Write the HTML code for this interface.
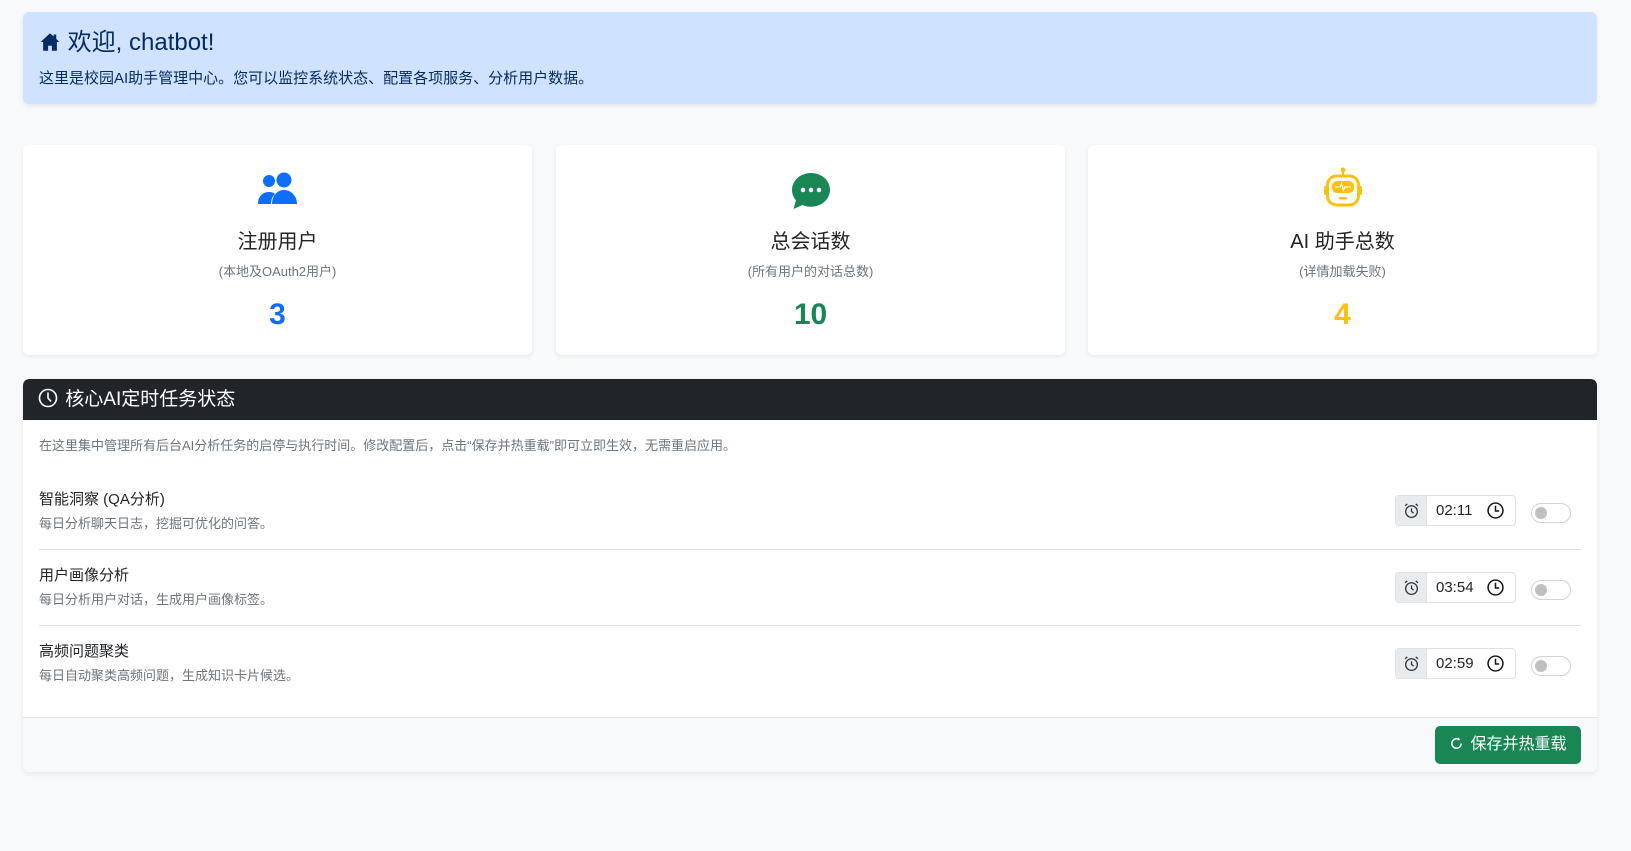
<!DOCTYPE html>
<html><head><meta charset="utf-8"><style>
*{box-sizing:border-box;margin:0;padding:0}
body{width:1631px;height:851px;background:#f8f9fa;font-family:"Liberation Sans","Noto Sans CJK SC",sans-serif;color:#212529;position:relative;overflow:hidden}
.abs{position:absolute}
.alert{left:23px;top:12px;width:1574px;height:92px;background:#cfe2ff;border-radius:6px;box-shadow:0 2px 4px rgba(0,0,0,.08);color:#052c65}
.card{background:#fff;border-radius:6px;box-shadow:0 2px 4px rgba(0,0,0,.07)}
.stat{top:145px;height:210px;width:509px;text-align:center}
.stat .t{position:absolute;top:84px;width:100%;font-size:20px;line-height:26px}
.stat .s{position:absolute;top:116px;width:100%;font-size:13px;color:#6c757d}
.stat .n{position:absolute;top:152px;width:100%;font-size:30px;font-weight:bold;line-height:36px}
.stat svg{position:absolute;left:50%;top:27px;transform:translateX(-50%)}
.row{position:absolute;left:16px;width:1542px}
.row .a{font-size:15px;line-height:20px}
.row .b{font-size:13px;color:#6c757d;margin-top:3px}
.ig{position:absolute;left:1372px;width:121px;height:31px;border:1px solid #dee2e6;border-radius:4px;background:#fff}
.ig .p{position:absolute;left:0;top:0;width:31px;height:29px;background:#e9ecef;border-right:1px solid #dee2e6;border-radius:4px 0 0 4px}
.ig .v{position:absolute;left:40px;top:6px;font-size:15px}
.tg{position:absolute;left:1508px;width:40px;height:20px;border:1px solid #ced4da;border-radius:10px}
.tg:after{content:"";position:absolute;left:3px;top:3px;width:12px;height:12px;border-radius:50%;background:#bfbfbf}
hr.d{position:absolute;left:16px;width:1542px;border:0;border-top:1px solid #dee2e6}
</style></head><body>
<div class="abs alert">
 <div class="abs" style="left:16px;top:15px;font-size:24px;line-height:32px">
  <svg width="22" height="20" viewBox="0 0 16 16" style="vertical-align:-2px"><path fill="#052c65" d="M8 1 0.5 8h2v7h4v-4h3v4h4V8h2L13 5.5V2h-2v1.6z"/></svg> 欢迎, chatbot!</div>
 <div class="abs" style="left:16px;top:55px;font-size:15px">这里是校园AI助手管理中心。您可以监控系统状态、配置各项服务、分析用户数据。</div>
</div>

<div class="abs card stat" style="left:23px">
 <svg width="40" height="34" viewBox="0 0 40 34"><circle cx="11" cy="9" r="6" fill="#0d6efd"/><circle cx="26" cy="8" r="7.5" fill="#0d6efd"/><path d="M0 32c0-8 5-12 11-12 3 0 5 1 6 2-3 3-4 6-4 10z" fill="#0d6efd"/><path d="M14 32c0-9 6-14 12-14s13 5 13 14z" fill="#0d6efd"/></svg>
 <div class="t">注册用户</div><div class="s">(本地及OAuth2用户)</div><div class="n" style="color:#0d6efd">3</div>
</div>
<div class="abs card stat" style="left:556px">
 <svg width="40" height="38" viewBox="0 0 40 38"><path d="M20 1C9.5 1 1 8.5 1 18c0 4 1.5 7.5 4 10.3L2.5 37l9-4c2.6 1.2 5.5 1.8 8.5 1.8 10.5 0 19-7.6 19-17S30.5 1 20 1z" fill="#198754"/><circle cx="12" cy="18" r="2.3" fill="#fff"/><circle cx="20" cy="18" r="2.3" fill="#fff"/><circle cx="28" cy="18" r="2.3" fill="#fff"/></svg>
 <div class="t">总会话数</div><div class="s">(所有用户的对话总数)</div><div class="n" style="color:#198754">10</div>
</div>
<div class="abs card stat" style="left:1088px">
 <svg width="40" height="40" viewBox="0 0 40 40" style="top:22px"><circle cx="20" cy="3" r="2.5" fill="#ffc107"/><rect x="19" y="3" width="2" height="6" fill="#ffc107"/><rect x="4.5" y="9" width="31" height="29" rx="9" fill="none" stroke="#ffc107" stroke-width="3"/><rect x="1" y="19" width="3" height="9" rx="1.5" fill="#ffc107"/><rect x="36" y="19" width="3" height="9" rx="1.5" fill="#ffc107"/><rect x="9" y="14" width="22" height="12" rx="5" fill="#ffc107"/><path d="M12 20h5l1.5-3 2 6 1.5-3h6" stroke="#fff" stroke-width="1.3" fill="none"/><rect x="16" y="30" width="8" height="2.5" rx="1" fill="#ffc107"/></svg>
 <div class="t">AI 助手总数</div><div class="s">(详情加载失败)</div><div class="n" style="color:#ffc107">4</div>
</div>

<div class="abs card" style="left:23px;top:379px;width:1574px;height:393px;overflow:hidden">
 <div class="abs" style="left:0;top:0;width:100%;height:41px;background:#212529;border-radius:6px 6px 0 0;color:#fff;font-size:19px;line-height:41px;padding-left:15px">
  <svg width="20" height="20" viewBox="0 0 20 20" style="vertical-align:-3px;margin-right:2px"><circle cx="10" cy="10" r="8.5" fill="none" stroke="#fff" stroke-width="1.6"/><path d="M10 4.5V10l3 3.5" stroke="#fff" stroke-width="1.6" fill="none"/></svg> 核心AI定时任务状态</div>
 <div class="abs" style="left:16px;top:56px;font-size:13px;color:#6c757d">在这里集中管理所有后台AI分析任务的启停与执行时间。修改配置后，点击“保存并热重载”即可立即生效，无需重启应用。</div>

 <div class="row" style="top:111px"><div class="a">智能洞察 (QA分析)</div><div class="b">每日分析聊天日志，挖掘可优化的问答。</div></div>
 <div class="ig" style="top:116px"><div class="p"></div><div class="v">02:11</div></div><div class="tg" style="top:124px"></div>
 <hr class="d" style="top:170px">
 <div class="row" style="top:187px"><div class="a">用户画像分析</div><div class="b">每日分析用户对话，生成用户画像标签。</div></div>
 <div class="ig" style="top:193px"><div class="p"></div><div class="v">03:54</div></div><div class="tg" style="top:201px"></div>
 <hr class="d" style="top:246px">
 <div class="row" style="top:263px"><div class="a">高频问题聚类</div><div class="b">每日自动聚类高频问题，生成知识卡片候选。</div></div>
 <div class="ig" style="top:269px"><div class="p"></div><div class="v">02:59</div></div><div class="tg" style="top:277px"></div>

 <div class="abs" style="left:0;top:338px;width:100%;height:55px;background:#f8f9fa;border-top:1px solid #dee2e6"></div>
 <div class="abs" style="left:1412px;top:347px;width:146px;height:38px;background:#198754;border-radius:5px;color:#fff;font-size:16px;line-height:38px;text-align:center">
  <svg width="15" height="15" viewBox="0 0 16 16" style="vertical-align:-2px;margin-right:6px"><path d="M13 8a5 5 0 1 1-2-4" stroke="#fff" stroke-width="1.6" fill="none"/><path d="M10 1.5 12 4l-3 .8z" fill="#fff"/></svg>保存并热重载</div>
</div>
<svg class="abs" style="left:1403px;top:502px" width="17" height="17" viewBox="0 0 16 16"><circle cx="8" cy="9" r="5.5" fill="none" stroke="#333" stroke-width="1.2"/><path d="M8 6v3l2 1.5M2 3.5 4 1.8M14 3.5 12 1.8" stroke="#333" stroke-width="1.2" fill="none"/></svg>
<svg class="abs" style="left:1403px;top:579px" width="17" height="17" viewBox="0 0 16 16"><circle cx="8" cy="9" r="5.5" fill="none" stroke="#333" stroke-width="1.2"/><path d="M8 6v3l2 1.5M2 3.5 4 1.8M14 3.5 12 1.8" stroke="#333" stroke-width="1.2" fill="none"/></svg>
<svg class="abs" style="left:1403px;top:655px" width="17" height="17" viewBox="0 0 16 16"><circle cx="8" cy="9" r="5.5" fill="none" stroke="#333" stroke-width="1.2"/><path d="M8 6v3l2 1.5M2 3.5 4 1.8M14 3.5 12 1.8" stroke="#333" stroke-width="1.2" fill="none"/></svg>
<svg class="abs" style="left:1487px;top:502px" width="17" height="17" viewBox="0 0 16 16"><circle cx="8" cy="8" r="7" fill="none" stroke="#111" stroke-width="1.4"/><path d="M8 3.5V8.5h3.5" stroke="#111" stroke-width="1.4" fill="none"/></svg>
<svg class="abs" style="left:1487px;top:579px" width="17" height="17" viewBox="0 0 16 16"><circle cx="8" cy="8" r="7" fill="none" stroke="#111" stroke-width="1.4"/><path d="M8 3.5V8.5h3.5" stroke="#111" stroke-width="1.4" fill="none"/></svg>
<svg class="abs" style="left:1487px;top:655px" width="17" height="17" viewBox="0 0 16 16"><circle cx="8" cy="8" r="7" fill="none" stroke="#111" stroke-width="1.4"/><path d="M8 3.5V8.5h3.5" stroke="#111" stroke-width="1.4" fill="none"/></svg>
</body></html>
